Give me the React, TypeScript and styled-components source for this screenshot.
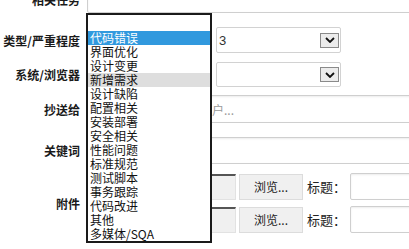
import React from "react";
import styled, { createGlobalStyle } from "styled-components";

const options = [
  "代码错误",
  "界面优化",
  "设计变更",
  "新增需求",
  "设计缺陷",
  "配置相关",
  "安装部署",
  "安全相关",
  "性能问题",
  "标准规范",
  "测试脚本",
  "事务跟踪",
  "代码改进",
  "其他",
  "多媒体/SQA",
];

const Chevron = () => (
  <svg width="10" height="6" viewBox="0 0 10 6">
    <polyline points="1,1 5,5 9,1" fill="none" stroke="#111" strokeWidth="1.8" />
  </svg>
);

const FakeSelect = ({ value }: { value?: string }) => (
  <SelectBox>
    <SelectValue>{value}</SelectValue>
    <ArrowBtn>
      <Chevron />
    </ArrowBtn>
  </SelectBox>
);

const FileField = () => (
  <FileRow>
    <FileText />
    <BrowseBtn>浏览...</BrowseBtn>
    <TitleLabel>标题：</TitleLabel>
    <TextInput w={80} h={27} />
  </FileRow>
);

const App = () => {
  return (
    <Page>
      <GlobalStyle />
      <Form>
        <Row h={28}>
          <Label>相关任务</Label>
          <TextInput w={340} h={28} />
        </Row>

        <Row h={26} mt={14}>
          <Label>类型/严重程度</Label>
          <Field>
            <FakeSelect />
            <FakeSelect value="3" />
          </Field>
        </Row>

        <Row h={25} mt={9}>
          <Label>系统/浏览器</Label>
          <Field>
            <FakeSelect />
            <FakeSelect />
          </Field>
        </Row>

        <Row h={28} mt={8}>
          <Label>抄送给</Label>
          <TextInput w={340} h={28} placeholder="选择需要抄送的相关用户..." />
        </Row>

        <Row h={27} mt={14}>
          <Label>关键词</Label>
          <TextInput w={340} h={27} />
        </Row>

        <Row h={60} mt={9}>
          <Label>附件</Label>
          <FileList>
            <FileField />
            <FileField />
          </FileList>
        </Row>
      </Form>

      <Listbox>
        <Blank />
        {options.map((o, i) => (
          <Option key={o} selected={i === 0} hover={i === 3}>
            {o}
          </Option>
        ))}
      </Listbox>
    </Page>
  );
};

export default App;

const GlobalStyle = createGlobalStyle`
  html, body {
    margin: 0;
    padding: 0;
    background: #fff;
    overflow: hidden;
  }
  body {
    font-family: "Noto Sans CJK SC", "Noto Sans", sans-serif;
    color: #222;
  }
`;

const Page = styled.div`
  position: relative;
  width: 409px;
  height: 249px;
  overflow: hidden;
`;

const Form = styled.div`
  margin-top: -15px;
  display: flex;
  flex-direction: column;
`;

const Row = styled.div<{ h: number; mt?: number }>`
  display: flex;
  align-items: center;
  height: ${(p) => p.h}px;
  margin-top: ${(p) => p.mt || 0}px;
`;

const Label = styled.div`
  flex: none;
  width: 87px;
  box-sizing: border-box;
  padding-right: 7px;
  text-align: right;
  font-size: 12px;
  font-weight: 700;
  color: #1a1a1a;
  white-space: nowrap;
`;

const Field = styled.div`
  display: flex;
  align-items: center;
  gap: 4px;
  height: 100%;
`;

const TextInput = styled.input<{ w: number; h: number }>`
  flex: none;
  box-sizing: border-box;
  width: ${(p) => p.w}px;
  height: ${(p) => p.h}px;
  border: 1px solid #cfcfcf;
  border-radius: 2px;
  box-shadow: inset 0 1px 2px rgba(0, 0, 0, 0.08);
  padding: 0 4px;
  font-family: "Noto Sans CJK SC", sans-serif;
  font-size: 12px;
  outline: none;
  &::placeholder {
    color: #9a9a9a;
  }
`;

const SelectBox = styled.div`
  box-sizing: border-box;
  width: 125px;
  height: 100%;
  border: 1px solid #d2d2d2;
  border-radius: 2px;
  display: flex;
  align-items: center;
  justify-content: space-between;
  padding: 0 1px 0 2px;
  background: #fff;
`;

const SelectValue = styled.span`
  font-family: "Liberation Sans", Arial, sans-serif;
  font-size: 13px;
  color: #333;
`;

const ArrowBtn = styled.span`
  box-sizing: border-box;
  width: 19px;
  height: 15px;
  border: 1px solid #8a8a8a;
  background: #ececec;
  display: flex;
  align-items: center;
  justify-content: center;
`;

const FileList = styled.div`
  display: flex;
  flex-direction: column;
  gap: 7px;
`;

const FileRow = styled.div`
  display: flex;
  align-items: center;
  height: 26px;
`;

const FileText = styled.div`
  box-sizing: border-box;
  width: 149px;
  height: 26px;
  background: #f0f0f0;
  border-top: 2px solid #555;
  border-left: 1px solid #777;
  border-right: 1px solid #e2e2e2;
  border-bottom: 1px solid #e2e2e2;
`;

const BrowseBtn = styled.div`
  box-sizing: border-box;
  width: 64px;
  height: 26px;
  margin-left: 3px;
  background: #f0f0f0;
  border: 1px solid #dcdcdc;
  display: flex;
  align-items: center;
  justify-content: center;
  font-size: 12px;
  color: #222;
`;

const TitleLabel = styled.span`
  margin: 0 4px 0 4px;
  font-size: 13px;
  color: #222;
  white-space: nowrap;
`;

const Listbox = styled.div`
  position: absolute;
  left: 86px;
  top: 13px;
  box-sizing: border-box;
  width: 126px;
  height: 230px;
  border: 2px solid #1a1a1a;
  background: #fff;
  display: flex;
  flex-direction: column;
`;

const Blank = styled.div`
  height: 17px;
`;

const Option = styled.div<{ selected?: boolean; hover?: boolean }>`
  height: 14px;
  line-height: 14px;
  padding-left: 2px;
  font-size: 12px;
  white-space: nowrap;
  color: ${(p) => (p.selected ? "#fff" : "#111")};
  background: ${(p) => (p.selected ? "#3199de" : p.hover ? "#dedede" : "transparent")};
`;
